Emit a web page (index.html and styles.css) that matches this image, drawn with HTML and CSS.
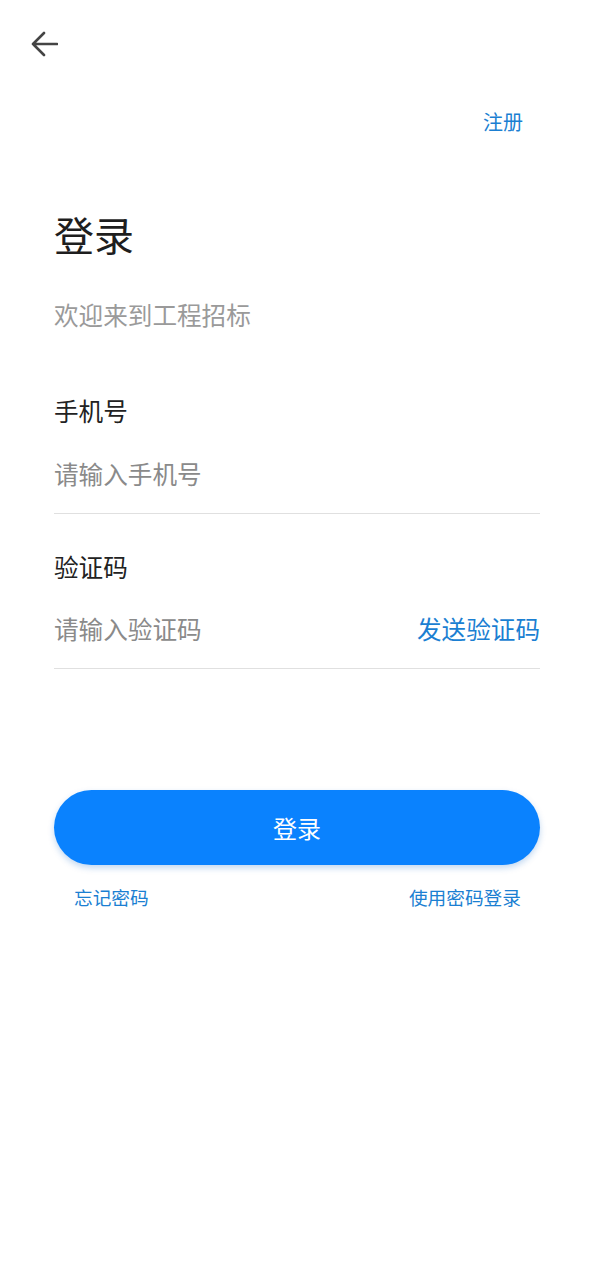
FILE: index.html
```html
<!DOCTYPE html>
<html lang="zh-CN">
<head>
<meta charset="utf-8">
<meta name="viewport" content="width=device-width, initial-scale=1">
<title>登录</title>
<link rel="stylesheet" href="styles.css">
</head>
<body>
<div class="page">
  <div class="topbar">
    <svg class="back" viewBox="0 0 28 26" width="28" height="26" aria-hidden="true">
      <path d="M27 13H3M14 2L3 13L14 24" fill="none" stroke="#444" stroke-width="2.6" stroke-linecap="round" stroke-linejoin="round"/>
    </svg>
  </div>
  <div class="register-row"><a class="register">注册</a></div>
  <main class="content">
    <h1 class="title">登录</h1>
    <p class="subtitle">欢迎来到工程招标</p>
    <div class="field">
      <div class="label">手机号</div>
      <div class="input-row">
        <span class="placeholder">请输入手机号</span>
      </div>
    </div>
    <div class="field">
      <div class="label">验证码</div>
      <div class="input-row">
        <span class="placeholder">请输入验证码</span>
        <a class="send">发送验证码</a>
      </div>
    </div>
    <button class="login-btn">登录</button>
    <div class="links">
      <a class="link">忘记密码</a>
      <a class="link">使用密码登录</a>
    </div>
  </main>
</div>
</body>
</html>
```

FILE: styles.css
```css
* { box-sizing: border-box; }
html, body {
  margin: 0;
  padding: 0;
  background: #fff;
}
body {
  font-family: "Noto Sans CJK SC", "Noto Sans", sans-serif;
  color: #222;
}
.page {
  width: 594px;
  min-height: 1280px;
}
.topbar {
  height: 108px;
  padding: 31px 0 0 30px;
}
.back { display: block; }
.register-row {
  display: flex;
  justify-content: flex-end;
  padding-right: 71px;
}
.register {
  font-size: 20px;
  line-height: 28px;
  color: #1b7fd2;
}
.content {
  padding: 0 54px;
}
.title {
  margin: 73px 0 0;
  font-size: 40px;
  line-height: 50px;
  font-weight: 400;
  color: #1e1e1e;
}
.subtitle {
  margin: 38px 0 0;
  font-size: 24.6px;
  line-height: 34px;
  color: #9a9a9a;
}
.label {
  font-size: 24.6px;
  line-height: 34px;
  color: #222;
}
.content .field:nth-of-type(1) { margin-top: 62px; }
.content .field + .field { margin-top: 35px; }
.input-row {
  display: flex;
  justify-content: space-between;
  align-items: center;
  height: 87px;
  padding-top: 5px;
  border-bottom: 1px solid #e0e0e0;
}
.field + .field .input-row {
  height: 86px;
}
.placeholder {
  font-size: 24.6px;
  line-height: 34px;
  color: #8a8a8a;
}
.send {
  font-size: 24.6px;
  line-height: 34px;
  color: #1b7fd2;
}
.login-btn {
  display: block;
  width: 100%;
  height: 75px;
  margin-top: 121px;
  border: none;
  border-radius: 38px;
  background: #0a82fe;
  color: #fff;
  font-family: inherit;
  font-size: 24px;
  box-shadow: 0 3px 6px rgba(10, 100, 200, 0.25);
}
.links {
  display: flex;
  justify-content: space-between;
  padding: 0 19px 0 20px;
  margin-top: 19px;
}
.link {
  font-size: 18.7px;
  line-height: 26px;
  color: #1b7fd2;
}
```
